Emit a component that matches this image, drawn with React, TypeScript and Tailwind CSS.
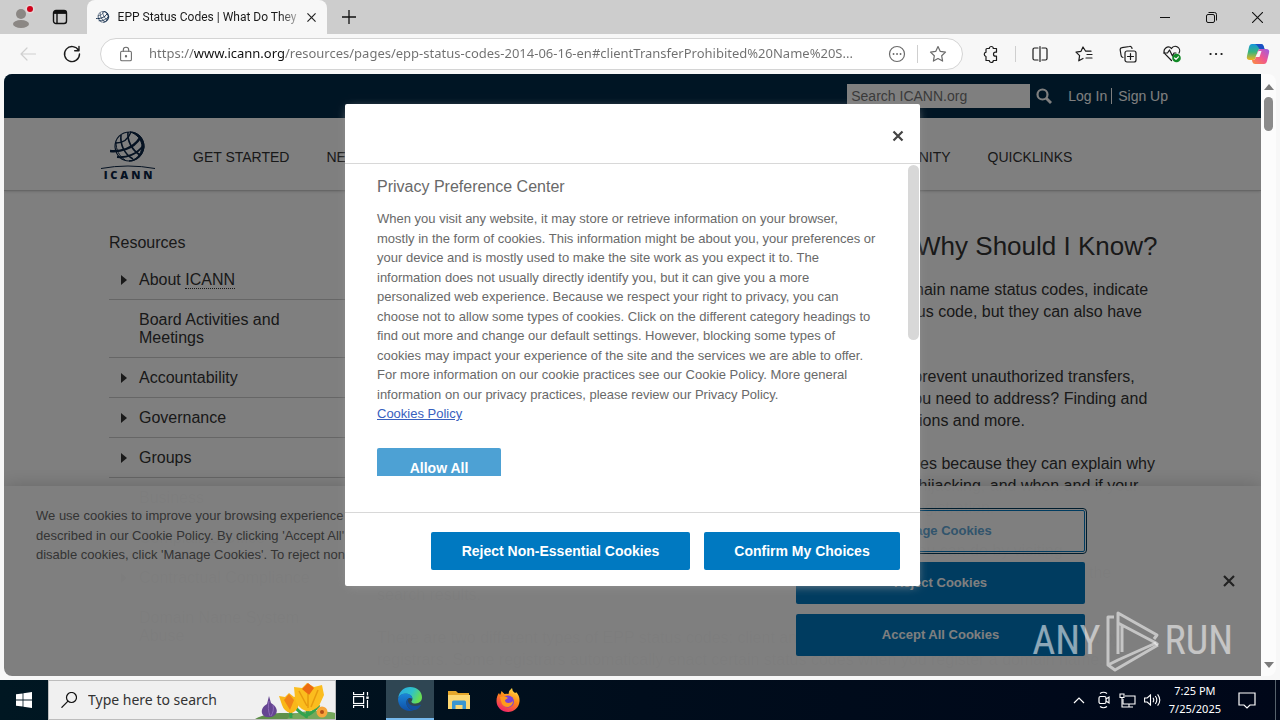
import React from "react";

const topNav = [
  "GET STARTED",
  "NEWS AND MEDIA",
  "POLICY",
  "PUBLIC COMMENT",
  "RESOURCES",
  "COMMUNITY",
  "QUICKLINKS",
];

const sideLinks = [
  { label: "Board Activities and Meetings", arrow: false },
  { label: "Accountability", arrow: true },
  { label: "Governance", arrow: true },
  { label: "Groups", arrow: true },
  { label: "Business", arrow: false },
  { label: "Complaints Office", arrow: false },
  { label: "Contractual Compliance", arrow: true },
  { label: "Domain Name System Abuse", arrow: false },
];

type IconProps = { className?: string; children: React.ReactNode };

// 20x20 line icon used by the browser chrome
const LineIcon: React.FC<IconProps> = ({ className = "size-5", children }) => (
  <svg
    viewBox="0 0 20 20"
    className={className}
    fill="none"
    stroke="currentColor"
    strokeWidth="1.2"
    strokeLinecap="round"
    strokeLinejoin="round"
    aria-hidden="true"
  >
    {children}
  </svg>
);

const Globe: React.FC<{ className?: string }> = ({ className }) => (
  <svg viewBox="0 0 36 32" className={className} fill="none" stroke="#0b2545" aria-hidden="true">
    <path d="M5 16C5 7 11 1 20 1c8 0 14 7 14 15-1 8-7 14-15 14-7 0-13-5-14-14Z" strokeWidth="1.2" />
    <path d="M20 1c9 0 14 7 14 15-1 8-7 14-15 14 7-1 12-6 13-14C32 9 27 3 20 1Z" fill="#0b2545" strokeWidth="1" />
    <path d="M0 20c10 1 23-2 30-13" strokeWidth="2.4" />
    <path d="M6 12c6 0 12-3 15-11" strokeWidth="1.4" />
    <path d="M7 26c10 1 20-3 26-11" strokeWidth="2" />
    <path d="M11 4c-1 9 3 19 12 24M18 1c-1 9 4 18 12 23" strokeWidth="1.6" />
    <path d="M6 11c0 8 3 14 9 18" strokeWidth="1" />
  </svg>
);

const TabStrip: React.FC = () => (
  <header className="flex h-[34px] shrink-0 items-stretch bg-[#cdcdcd]">
    <button aria-label="Profile" className="ml-2 flex w-7 items-center justify-center">
      <svg viewBox="0 0 26 26" className="size-[26px]">
        <circle cx="12" cy="10" r="5" fill="#8b8784" />
        <ellipse cx="12" cy="20" rx="8" ry="4" fill="#8b8784" />
        <circle cx="21" cy="5" r="4.6" fill="#e3d6d6" />
        <circle cx="21" cy="5" r="3" fill="#d0021b" />
      </svg>
    </button>
    <button aria-label="Tab actions" className="ml-2 flex w-8 items-center justify-center">
      <svg viewBox="0 0 16 16" className="size-4" fill="none" stroke="#111" strokeWidth="1.4">
        <rect x="1.5" y="1.5" width="13" height="13" rx="2.5" />
        <path d="M2 3.4h12" strokeWidth="3" />
        <path d="M5 4v10" />
      </svg>
    </button>
    <div className="ml-[11px] flex w-60 items-center rounded-t-lg bg-[#f7f7f7] pr-2 pl-[9px]">
      <Globe className="h-3 w-[15px]" />
      <span className="ml-2 flex-1 bg-linear-to-r from-[#1a1a1a] from-90% to-[#b0b0b0] bg-clip-text font-[Roboto,sans-serif] text-xs whitespace-nowrap text-transparent">
        EPP Status Codes | What Do They
      </span>
      <button aria-label="Close tab" className="ml-2 flex size-4 items-center justify-center">
        <svg viewBox="0 0 10 10" className="size-[9px]" stroke="#222" strokeWidth="1.3">
          <path d="M.5 .5l9 9M9.500 .5l-9 9" />
        </svg>
      </button>
    </div>
    <button aria-label="New tab" className="ml-2 flex w-7 items-center justify-center">
      <svg viewBox="0 0 14 14" className="size-3.5" stroke="#111" strokeWidth="1.3">
        <path d="M7 0v14M0 7h14" />
      </svg>
    </button>
    <div className="ml-auto flex">
      <button aria-label="Minimize" className="flex w-[46px] items-center justify-center">
        <svg viewBox="0 0 10 10" className="size-2.5" stroke="#111"><path d="M0 5.5h10" /></svg>
      </button>
      <button aria-label="Restore" className="flex w-[46px] items-center justify-center">
        <svg viewBox="0 0 11 11" className="size-[11px]" fill="none" stroke="#111">
          <rect x=".5" y="2.500" width="8" height="8" rx="1.500" />
          <path d="M2.500 .5H8.500a2 2 0 0 1 2 2v6" />
        </svg>
      </button>
      <button aria-label="Close window" className="flex w-[46px] items-center justify-center">
        <svg viewBox="0 0 10 10" className="size-[11px]" stroke="#111"><path d="M0 0l10 10M10 0L0 10" /></svg>
      </button>
    </div>
  </header>
);

const Toolbar: React.FC = () => (
  <div className="flex h-10 shrink-0 items-center bg-[#f7f7f7] text-[#1b1b1b]">
    <button aria-label="Back" className="ml-[18px] text-[#cfcfcf]">
      <LineIcon><path d="M17.500 10H3M9 4l-6 6 6 6" /></LineIcon>
    </button>
    <button aria-label="Refresh" className="ml-6">
      <LineIcon>
        <path d="M16.600 6.500A7.500 7.500 0 1 0 17.500 10M17 2.500v4.300h-4.300" strokeWidth="1.400" />
      </LineIcon>
    </button>
    <div className="ml-[18px] flex h-8 min-w-0 flex-1 items-center rounded-full border border-[#d4d4d4] bg-white pr-3.5 pl-4 text-[#6b6b6b]">
      <LineIcon className="size-[18px] shrink-0">
        <rect x="4" y="7" width="12" height="10.500" rx="1.500" />
        <path d="M7 7V5.500a3 3 0 0 1 6 0V7" />
        <circle cx="10" cy="12.500" r=".7" fill="currentColor" />
      </LineIcon>
      <input
        aria-label="Address"
        className="ml-3.5 min-w-0 flex-1 bg-[linear-gradient(90deg,#6f6f6f_0_45px,#111_45px_135px,#6f6f6f_135px)] bg-clip-text text-[13px] text-transparent outline-none"
        defaultValue="https://www.icann.org/resources/pages/epp-status-codes-2014-06-16-en#clientTransferProhibited%20Name%20S..."
      />
      <button aria-label="Page options" className="ml-2">
        <LineIcon>
          <circle cx="10" cy="10" r="7.500" />
          <path d="M6.500 10h.1M10 10h.1M13.500 10h.1" strokeWidth="1.800" />
        </LineIcon>
      </button>
      <span className="mx-2.5 h-[18px] w-px bg-[#cfcfcf]" />
      <button aria-label="Add to favorites">
        <LineIcon><path d="M10 2.500l2.300 4.900 5.200.7-3.800 3.700.9 5.300-4.600-2.600-4.600 2.600.9-5.300L2.500 8.100l5.200-.7Z" /></LineIcon>
      </button>
    </div>
    <button aria-label="Extensions" className="ml-[18px]">
      <LineIcon>
        <path d="M6 4.500h2.300a2 2 0 0 1 4 0H15.500v3.700h-1a2 2 0 0 0 0 4h1v4.300h-3.200a2 2 0 0 1-4 0H5v-4a2.200 2.200 0 0 1 0-4.300V5.500a1 1 0 0 1 1-1Z" />
      </LineIcon>
    </button>
    <span className="ml-3.5 h-4 w-px bg-[#cfcfcf]" />
    <button aria-label="Split screen" className="ml-3.5">
      <LineIcon>
        <path d="M8 4H4.500A1.500 1.500 0 0 0 3 5.500v9A1.500 1.500 0 0 0 4.500 16H8M12 4h3.500A1.500 1.500 0 0 1 17 5.500v9a1.500 1.500 0 0 1-1.500 1.500H12M10 2.500v15" />
      </LineIcon>
    </button>
    <button aria-label="Favorites" className="ml-6">
      <LineIcon>
        <path d="M11.500 7l5.500.2M9 3L7 7.300l-5 .8 3.600 3.500-.8 5.200L9 14.500M9 3l2.500 4M13 10.500h5M12 14h6" />
      </LineIcon>
    </button>
    <button aria-label="Collections" className="ml-6">
      <LineIcon>
        <rect x="7" y="7" width="11" height="11" rx="2" />
        <path d="M12.500 9.500v6M9.500 12.500h6M5 13.500A2.500 2.500 0 0 1 3 11L2.200 6A2 2 0 0 1 4 3.700L11.500 2.500A2 2 0 0 1 14 4.500" />
      </LineIcon>
    </button>
    <button aria-label="Browser essentials" className="ml-6">
      <LineIcon>
        <path d="M9.500 16.500L3 9.800A4.200 4.200 0 0 1 9.500 4.500 4.200 4.200 0 0 1 17 9M1.500 9h4l2-3 3 6 1.500-3h2" />
        <circle cx="14.500" cy="14" r="4.300" fill="#128a27" stroke="none" />
        <path d="M12.600 14l1.400 1.400 2.400-2.600" stroke="#fff" />
      </LineIcon>
    </button>
    <button aria-label="Settings and more" className="ml-6">
      <LineIcon><path d="M4.500 10h.1M10 10h.1M15.500 10h.1" strokeWidth="2.200" /></LineIcon>
    </button>
    <button aria-label="Copilot" className="mr-2.5 ml-5">
      <svg viewBox="0 0 24 22" className="h-[22px] w-6">
        <defs>
          <linearGradient id="copA" x1="0" y1="0" x2="0" y2="1">
            <stop offset="0" stopColor="#1597dc" />
            <stop offset=".5" stopColor="#37b57d" />
            <stop offset="1" stopColor="#f2b31d" />
          </linearGradient>
          <linearGradient id="copB" x1="1" y1="0" x2="0" y2="1">
            <stop offset="0" stopColor="#9a5ce6" />
            <stop offset=".5" stopColor="#f0568f" />
            <stop offset="1" stopColor="#fb8f3d" />
          </linearGradient>
        </defs>
        <path d="M6 1h9q2 0 2.600 2l.9 3h-4q-2 0-2.600 2L9.500 15q-.6 2-2.600 2H4q-4 0-3-4L3 4q.7-3 3-3Z" fill="url(#copA)" />
        <path d="M9 1h6q2 0 2.600 2l.9 3h-4q-1.500 0-2-1.500Q11 1.500 9 1Z" fill="#1b4fc4" />
        <path d="M18 21H9q-2 0-2.600-2l-.4-2h1q2 0 2.600-2l2.300-7q.6-2 2.600-2H20q4 0 3 4l-2 8q-.7 3-3 3Z" fill="url(#copB)" />
        <path d="M12.500 8h3l-2 6h-4Z" fill="#f7f7f7" />
      </svg>
    </button>
  </div>
);

const SiteHeader: React.FC = () => (
  <>
    <div className="bg-[#002b49]">
      <div className="mx-auto flex h-11 max-w-[1071px] items-center justify-end text-sm text-white">
        <input
          aria-label="Search ICANN.org"
          placeholder="Search ICANN.org"
          className="h-6 w-[183px] bg-white px-1 text-sm placeholder:text-[#757575]"
        />
        <button aria-label="Search" className="ml-1.5">
          <svg viewBox="0 0 16 16" className="size-4" fill="none" stroke="currentColor" strokeWidth="2.200">
            <circle cx="6.500" cy="6.500" r="5" />
            <path d="M10 10l5 5" strokeWidth="2.800" />
          </svg>
        </button>
        <a href="#login" className="ml-4 border-r border-white pr-1 leading-4">Log In</a>
        <a href="#signup" className="pl-1.5 leading-4">Sign Up</a>
      </div>
    </div>
    <div className="border-b border-[#ccc] bg-white shadow-sm">
      <div className="mx-auto flex h-[72px] max-w-[1071px] items-center">
        <a href="#home" aria-label="ICANN" className="ml-1 w-[54px]">
          <Globe className="mx-auto mt-1 h-8 w-9" />
          <svg viewBox="0 0 54 4" className="mt-0.5 h-1 w-full" fill="none" stroke="#0b2545">
            <path d="M0 3.500Q27-1.500 54 3.500" />
          </svg>
          <span className="block text-center font-['Open_Sans',sans-serif] text-[11px] leading-3 font-extrabold text-[#0b2545]">I C A N N</span>
        </a>
        <nav className="ml-[38px] flex gap-[37px] pt-1.5 text-sm whitespace-nowrap text-[#333]">
          {topNav.map((item) => (
            <a key={item} href="#nav">{item}</a>
          ))}
        </nav>
      </div>
    </div>
  </>
);

const Arrow: React.FC = () => (
  <svg viewBox="0 0 6 10" className="h-2.5 w-1.5" fill="#333" aria-hidden="true">
    <path d="M0 0l6 5-6 5Z" />
  </svg>
);

const Article: React.FC = () => (
  <div className="mx-auto flex max-w-[1071px] gap-7 px-3 pt-10 text-base text-[#333]">
    <aside className="w-60 shrink-0">
      <h2 className="mb-[5px] leading-6">Resources</h2>
      <ul>
        <li className="flex min-h-10 items-center border-b border-[#ccc] leading-[18px]">
          <span className="w-[30px] pl-3"><Arrow /></span>
          <a href="#about">About <abbr className="border-b border-dotted border-[#333] no-underline">ICANN</abbr></a>
        </li>
        {sideLinks.map((link) => (
          <li key={link.label} className="flex items-center border-b border-[#ccc] pt-[11px] pb-2.5 leading-[18px]">
            <span className="w-[30px] shrink-0 pl-3">{link.arrow && <Arrow />}</span>
            <a href="#side" className="pr-8">{link.label}</a>
          </li>
        ))}
      </ul>
    </aside>
    <main className="-mt-px flex-1 leading-[22px]">
      <h1 className="mb-[17px] text-[26px] leading-8 whitespace-nowrap">
        EPP Status Codes | What Do They Mean, and Why Should I Know?
      </h1>
      <div className="space-y-[21px]">
        <p>
          Extensible Provisioning Protocol (EPP) domain status codes, also called domain name status codes, indicate
          the status of a domain name registration. Every domain has at least one status code, but they can also have
          more than one.
        </p>
        <p>
          Are your domain names about to be dropped? Are they always protected to prevent unauthorized transfers,
          updates or deletions? Do they have any limitations or pending actions that you need to address? Finding and
          understanding your domains' status codes will help answer all of these questions and more.
        </p>
        <p>
          It is important for registrants (that means you!) to understand EPP status codes because they can explain why
          your domain may have stopped working, if it is protected from domain name hijacking, and when and if your
          domain name registration will expire and become available to the public for registration.
        </p>
        <p>
          You can find your domains' status codes by running a Whois lookup, which you can do by visiting
          http://whois.icann.org or your registrar's website. Your domain's EPP status codes will be included
          in the search results.
        </p>
        <p>
          There are two different types of EPP status codes: client and server codes. Client status codes are set by
          registrars. Some registrars automatically enact certain status codes when you register a domain name.
        </p>
      </div>
    </main>
  </div>
);

const CookieBanner: React.FC = () => (
  <section
    aria-label="Cookie banner"
    className="absolute inset-x-0 bottom-0 flex bg-white/98 pt-5 pb-5 pl-8 shadow-[0_0_18px_rgba(0,0,0,0.2)]"
  >
    <p className="flex-1 text-[13px] leading-normal text-[#696969]">
      We use cookies to improve your browsing experience and to analyze our traffic, as
      <br />
      described in our Cookie Policy. By clicking 'Accept All', you consent to our use of cookies. To
      <br />
      disable cookies, click 'Manage Cookies'. To reject non-essential cookies, click 'Reject Cookies'.
    </p>
    <div className="flex w-[289px] shrink-0 flex-col gap-2.5 pt-1 text-[13px] font-bold">
      <button className="h-[42px] rounded-xs border border-[#0079c1] text-[#62a8d8] outline-1 outline-offset-1 outline-[#003a5c]">
        Manage Cookies
      </button>
      <button className="h-[42px] rounded-xs bg-[#0079c1] text-white">Reject Cookies</button>
      <button className="h-[42px] rounded-xs bg-[#0079c1] text-white">Accept All Cookies</button>
    </div>
    <div className="flex w-44 shrink-0 items-center justify-end pr-[26px]">
      <button aria-label="Close banner" className="text-[#444]">
        <svg viewBox="0 0 12 12" className="size-3" stroke="currentColor" strokeWidth="2.200">
          <path d="M1 1l10 10M11 1L1 11" />
        </svg>
      </button>
    </div>
  </section>
);

const PreferenceCenter: React.FC = () => (
  <div
    role="dialog"
    aria-label="Privacy Preference Center"
    className="absolute inset-x-0 top-[5%] mx-auto flex h-4/5 w-[575px] flex-col rounded-xs bg-white text-[#696969] shadow-[0_2px_10px_-3px_#999]"
  >
    <div className="flex h-[60px] shrink-0 items-center justify-end border-b border-[#d8d8d8] pt-1 pr-4">
      <button aria-label="Close" className="text-[#444]">
        <svg viewBox="0 0 12 12" className="size-3" stroke="currentColor" strokeWidth="2.200">
          <path d="M1.500 1.500l9 9M10.500 1.500l-9 9" />
        </svg>
      </button>
    </div>
    <div className="mb-9 flex min-h-0 flex-1 overflow-hidden">
      <div className="flex-1 px-8 pt-[11px]">
        <h2 className="text-base leading-6">Privacy Preference Center</h2>
        <p className="mt-2.5 text-[13px] leading-normal">
          When you visit any website, it may store or retrieve information on your browser, mostly in the form of
          cookies. This information might be about you, your preferences or your device and is mostly used to make the
          site work as you expect it to. The information does not usually directly identify you, but it can give you a
          more personalized web experience. Because we respect your right to privacy, you can choose not to allow some
          types of cookies. Click on the different category headings to find out more and change our default settings.
          However, blocking some types of cookies may impact your experience of the site and the services we are able
          to offer. For more information on our cookie practices see our Cookie Policy. More general information on our
          privacy practices, please review our Privacy Policy.
          <br />
          <a href="#policy" className="text-[#3860be] underline">Cookies Policy</a>
        </p>
        <button className="mt-6 h-10 w-[124px] rounded-xs bg-[#4da1d4] text-sm font-bold text-white">Allow All</button>
      </div>
      <div className="mt-px mr-px h-[175px] w-[11px] shrink-0 rounded-full bg-[#d8d8d8]" />
    </div>
    <div className="flex h-[74px] shrink-0 items-center justify-end gap-3.5 border-t border-[#d8d8d8] pt-[3px] pr-5 text-sm font-bold text-white">
      <button className="h-[38px] w-[259px] rounded-xs bg-[#0079c1]">Reject Non-Essential Cookies</button>
      <button className="h-[38px] w-[196px] rounded-xs bg-[#0079c1]">Confirm My Choices</button>
    </div>
  </div>
);

const Watermark: React.FC = () => (
  <div className="absolute right-7 bottom-1 flex items-center gap-1 font-['Liberation_Sans_Narrow','Roboto_Condensed',sans-serif] text-[40px] leading-none text-white/55">
    <span>ANY</span>
    <svg viewBox="0 0 56 62" className="h-[62px] w-14" fill="none" stroke="currentColor" strokeWidth="3" strokeLinejoin="round">
      <path d="M9 7H3v48l7 5 43-25M3 55l10-5 38-17" />
      <path d="M13 44V3l39 22-3 4M13 3v10l38 20 2 2M17 16v26" />
    </svg>
    <span>RUN</span>
  </div>
);

const Taskbar: React.FC = () => (
  <footer className="flex h-10 shrink-0 items-stretch bg-linear-to-r from-[#001722] via-[#000d1c] to-[#000719] text-white">
    <button aria-label="Start" className="flex w-12 items-center justify-center">
      <svg viewBox="0 0 16 16" className="size-4" fill="#fff">
        <path d="M0 2.300L6.600 1.400V7.600H0ZM7.400 1.300L16 0V7.600H7.400ZM0 8.400H6.600V14.600L0 13.700ZM7.400 8.400H16V16L7.400 14.800Z" />
      </svg>
    </button>
    <div className="flex w-72 items-center border border-[#bdbdbd] bg-[#f0f0f0] pl-3 text-[#111]">
      <svg viewBox="0 0 16 16" className="size-4 shrink-0" fill="none" stroke="currentColor" strokeWidth="1.200">
        <circle cx="10.500" cy="5.500" r="5" />
        <path d="M7 9.200L.5 15.700" />
      </svg>
      <input
        aria-label="Type here to search"
        placeholder="Type here to search"
        className="ml-[11px] w-0 flex-1 bg-transparent text-sm outline-none placeholder:text-[#333]"
      />
      <svg viewBox="0 0 80 38" className="h-[38px] w-20 shrink-0" aria-hidden="true">
        <path d="M0 38C18 28 40 34 50 32s20-2 30 0v6Z" fill="#5f8f4a" />
        <path d="M32 38C40 30 56 28 80 32v6Z" fill="#75a85b" />
        <path d="M53 24q0 8-2 13M35 28q1 5 1 9M53 34q8-5 11-10M51 35q-7-4-10-8" fill="none" stroke="#32a34e" strokeWidth="3" />
        <path d="M14 15l2 7c5 3 8 8 4 12-3 3-10 3-12 0-3-4 0-9 4-11Z" fill="#654592" />
        <path d="M14 20c-1 5-1 10 1 15M18 24c1 4 0 8-2 11" stroke="#8d6ab8" fill="none" />
        <path d="M24 15l6 1 4-4 5 4 6-2-2 12q-3 6-8 6-6-2-8-8Z" fill="#f9b719" />
        <path d="M29 19l5-6 5 6-4 10Z" fill="#f08318" />
        <path d="M39 6l8 1 5-5 7 4 8-2 2 10-5 11q-6 6-13 5-9-3-11-13Z" fill="#fbbd1e" />
        <path d="M47 8l6-6 6 5-5 7Z" fill="#ec6a12" />
        <path d="M44 10l8 15M63 9l-7 17M53 13v14" stroke="#e79a0e" strokeWidth="1.500" fill="none" />
        <circle cx="67" cy="31" r="5.500" fill="#f6a63b" />
        <circle cx="67" cy="31" r="2" fill="#b24e16" />
      </svg>
    </div>
    <button aria-label="Task view" className="flex w-[50px] items-center justify-center">
      <svg viewBox="0 0 16 16" className="size-4" fill="none" stroke="#fff" strokeWidth="1.200">
        <path d="M.6 0v2.500h10V0M.6 16v-2.500h10V16M14.500 0v3.500M14.500 8v8" />
        <rect x=".6" y="4.500" width="10" height="7" />
        <rect x="13.300" y="4.500" width="2.400" height="2.400" fill="#fff" stroke="none" />
      </svg>
    </button>
    <button aria-label="Microsoft Edge" className="flex w-12 items-center justify-center border-b-2 border-[#76b9ed] bg-[#2f4653]">
      <svg viewBox="0 0 24 24" className="size-6">
        <defs>
          <linearGradient id="edgeA" x1="0" y1="0" x2="1" y2=".4">
            <stop offset="0" stopColor="#2aa6e3" />
            <stop offset=".6" stopColor="#2fc2c9" />
            <stop offset="1" stopColor="#66dd55" />
          </linearGradient>
          <linearGradient id="edgeB" x1="0" y1="0" x2="0" y2="1">
            <stop offset="0" stopColor="#1b86d8" />
            <stop offset="1" stopColor="#0f4fa6" />
          </linearGradient>
        </defs>
        <path d="M.2 11C1 4.500 6 0 12.200 0 19 0 24 4.800 24 10.300c0 4-3 6.200-6.300 6.200-3 0-4.300-1-4.300-1.800 0-.6 1-1 1-3 0-2.600-2.700-5-6.600-5C4 6.700 1 8.600.2 11Z" fill="url(#edgeA)" />
        <path d="M.2 11C1.300 8 4 6.500 7.600 6.500c4.200 0 6.800 2.500 6.800 5.200-4.400-2-6 1.300-6 4 0 4 3.700 7.700 7.600 7.400-7.500 3-16-2-16-11Z" fill="url(#edgeB)" />
        <path d="M8.400 15c-.3 5 4.600 8.600 9 8 2.300-.7 4.600-3 5.300-4.600.2-.5-.2-.8-.7-.5-5 2.400-10.600.8-12-3.500-.4-1 .3-2.200 1.200-2.700-2 .3-2.800 2-2.800 3.300Z" fill="#134f9e" />
      </svg>
    </button>
    <button aria-label="File Explorer" className="flex w-[50px] items-center justify-center">
      <svg viewBox="0 0 22 20" className="h-5 w-[22px]">
        <path d="M0 1h8l2 2h11v6H0Z" fill="#e5a72b" />
        <path d="M0 5h22v14H0Z" fill="#fcd772" />
        <path d="M4 19v-7q0-1.500 1.500-1.500h11Q18 10.500 18 12v7h-3.500v-4h-7v4Z" fill="#3a96d0" />
      </svg>
    </button>
    <button aria-label="Firefox" className="flex w-12 items-center justify-center">
      <svg viewBox="0 0 24 24" className="size-6">
        <defs>
          <linearGradient id="fox" x1=".8" y1="0" x2=".3" y2="1">
            <stop offset="0" stopColor="#ffe14a" />
            <stop offset=".45" stopColor="#ff8a16" />
            <stop offset="1" stopColor="#f0206b" />
          </linearGradient>
        </defs>
        <path d="M3 5l1 2q1-1.500 1.500-4l3 3q2-.7 4 0Q13 2 16 0q0 3 3 5 1 0 1-1 4 4 3.500 9.500C23 19.500 18 24 12 24S.5 19.500.5 13C.5 9.500 1.500 7 3 5Z" fill="url(#fox)" />
        <circle cx="12" cy="13.500" r="6" fill="#7a43d6" />
        <path d="M4 9q5-2 8 1l-3 2q0 3 3.500 3 3 0 4.500-2 0 5-5 6-6 0-7-6Z" fill="#ff9a1c" />
      </svg>
    </button>
    <div className="ml-auto flex items-center">
      <svg viewBox="0 0 12 8" className="h-2 w-3" fill="none" stroke="#fff" strokeWidth="1.200"><path d="M1 7l5-5 5 5" /></svg>
      <svg viewBox="0 0 14 18" className="ml-3 h-[18px] w-3.5" fill="none" stroke="#fff" strokeWidth="1.200">
        <rect x="2" y="5.500" width="7" height="7" rx="1.500" />
        <path d="M9 8l3-2v6l-3-2M3 2.500Q6.500 0 10 2.500M3 15.500q3.500 2.500 7 0" />
      </svg>
      <svg viewBox="0 0 17 15" className="ml-2 h-[15px] w-[17px]" fill="none" stroke="#fff" strokeWidth="1.100">
        <path d="M6 3h10v8H4V6M10 11v3M6 14h8" />
        <path d="M1 1h4v3.500H1ZM3 4.500V14h3" />
      </svg>
      <svg viewBox="0 0 17 14" className="ml-2 h-3.5 w-[17px]" fill="none" stroke="#fff" strokeWidth="1.100">
        <path d="M.6 5v4h2.600l3.300 3V2L3.200 5ZM9 4.800q1.500 2.200 0 4.400M11.300 3q3 4 0 8M13.600 1.300q4.400 5.700 0 11.400" />
      </svg>
      <div className="ml-2 text-center text-[11px] leading-[18px] whitespace-nowrap">
        7:25 PM
        <br />
        7/25/2025
      </div>
      <button aria-label="Notifications" className="ml-[17px]">
        <svg viewBox="0 0 18 17" className="h-[17px] w-[18px]" fill="none" stroke="#fff" strokeWidth="1.200">
          <path d="M1 1h16v12h-5l-3 3-3-3H1Z" />
        </svg>
      </button>
      <span className="mr-1 ml-[19px] h-10 w-px bg-[#56616c]" />
    </div>
  </footer>
);

export default function App() {
  return (
    <div className="flex h-screen flex-col overflow-hidden bg-[#f7f7f7] font-['Noto_Sans','Open_Sans',sans-serif]">
      <TabStrip />
      <Toolbar />
      <div className="mx-1 mb-1 flex min-h-0 flex-1 overflow-hidden rounded-lg bg-[#fcfcfc] font-['Liberation_Sans',Arial,sans-serif]">
        <div className="relative min-w-0 flex-1 overflow-hidden bg-white">
          <SiteHeader />
          <Article />
          <CookieBanner />
          <div className="absolute inset-0 bg-black/50" />
          <PreferenceCenter />
          <Watermark />
        </div>
        <div className="flex w-[15px] shrink-0 flex-col items-center pt-2.5 pb-2">
          <svg viewBox="0 0 10 6" className="h-1.5 w-2.5" fill="#7b7b7b"><path d="M5 0l5 6H0Z" /></svg>
          <div className="mt-[7px] h-[34px] w-[9px] rounded-full bg-[#8b8b8b]" />
          <svg viewBox="0 0 10 6" className="mt-auto h-1.5 w-2.5" fill="#7b7b7b"><path d="M0 0h10L5 6Z" /></svg>
        </div>
      </div>
      <Taskbar />
    </div>
  );
}
